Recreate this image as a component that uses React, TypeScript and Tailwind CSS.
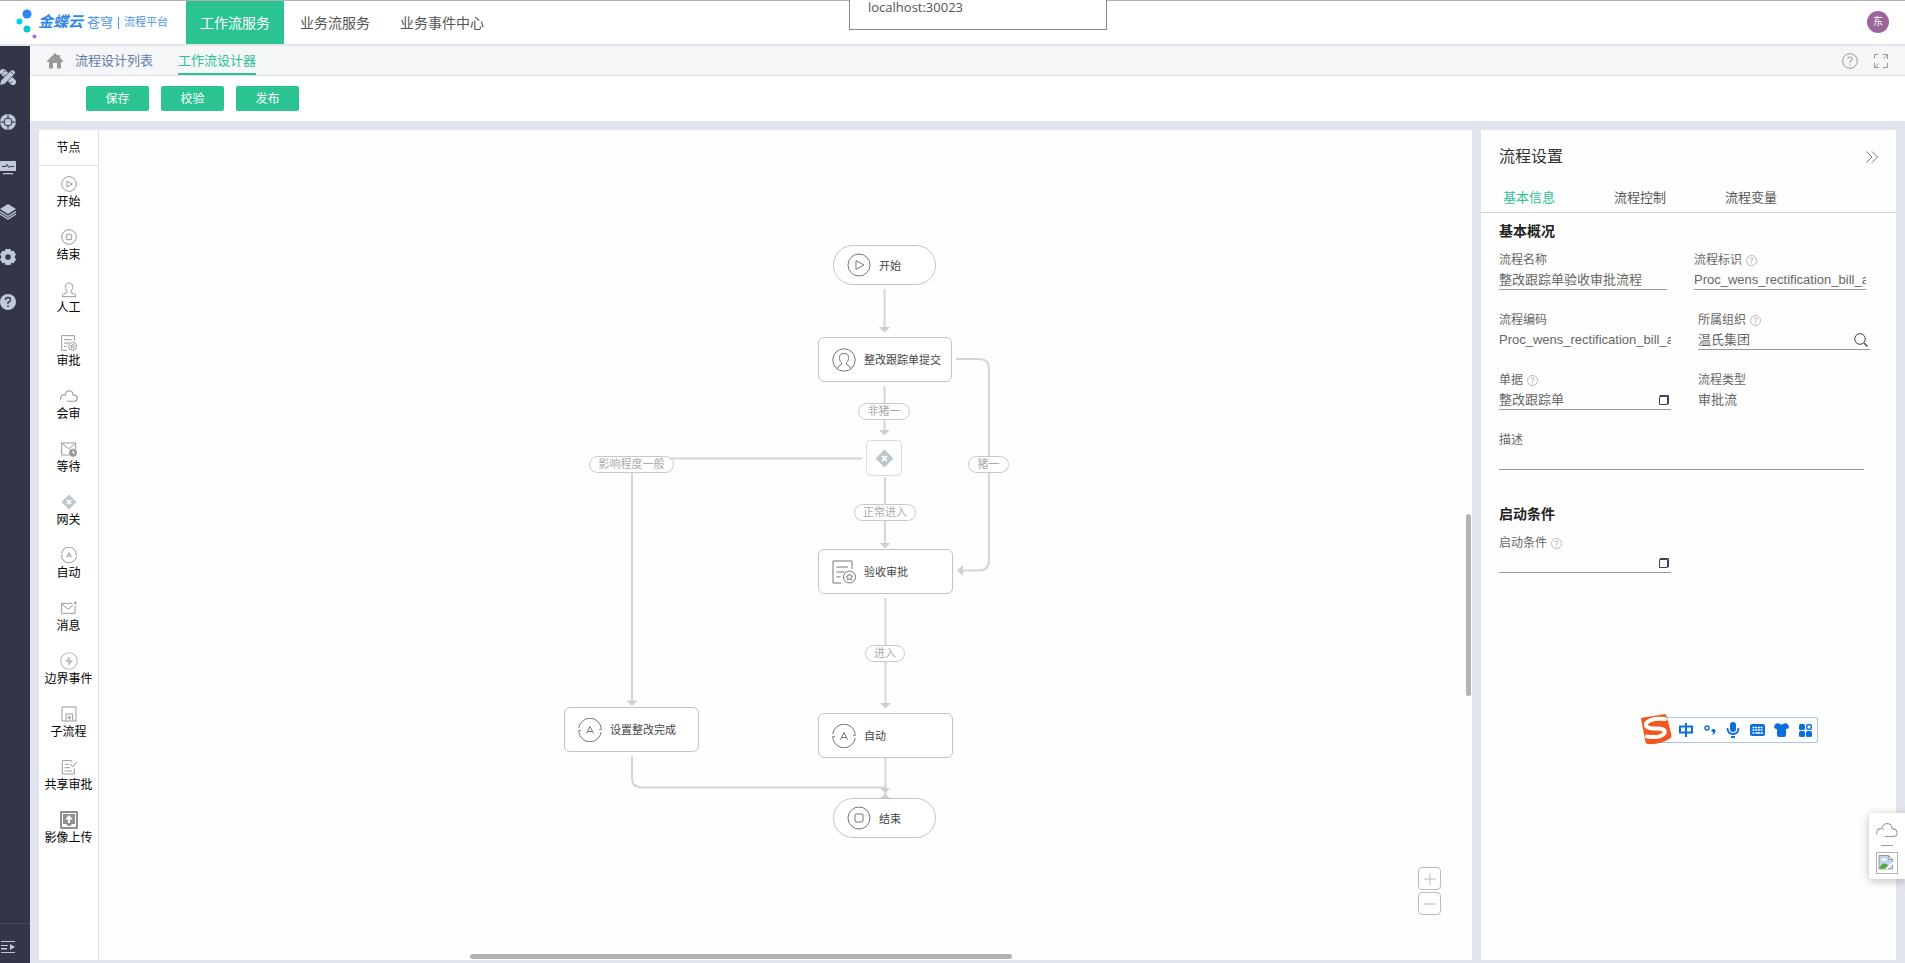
import { ReactNode } from "react";

type IconProps = { className?: string; strokeWidth?: number };

type PaletteItem = {
  label: string;
  icon: ReactNode;
};

type FlowNode = {
  label: string;
  icon: ReactNode;
  className: string;
};

/* Icons */
const Line = ({ className = "size-4", strokeWidth = 1.5, children }: IconProps & { children: ReactNode }) => (
  <svg className={className} viewBox="0 0 24 24" fill="none" stroke="currentColor" strokeWidth={strokeWidth} aria-hidden="true">
    {children}
  </svg>
);

const StartIcon = (props: IconProps) => (
  <Line {...props}>
    <circle cx="12" cy="12" r="11" />
    <path d="M9 7.5v9l8-4.5z" />
  </Line>
);

const EndIcon = (props: IconProps) => (
  <Line {...props}>
    <circle cx="12" cy="12" r="11" />
    <rect x="8" y="8" width="8" height="8" rx="1" />
  </Line>
);

const PersonIcon = (props: IconProps) => (
  <Line {...props}>
    <path d="M9 13.5C6.500 11.500 6.500 8.500 6.500 7C6.500 3.500 9 1.500 12 1.500S17.500 3.500 17.500 7C17.500 8.500 17.500 11.500 15 13.500V16L21 18.500Q22 19 22 22H2Q2 19 3 18.500L9 16Z" />
  </Line>
);

const UserIcon = (props: IconProps) => (
  <Line {...props}>
    <circle cx="12" cy="12" r="11.2" />
    <path d="M5.500 20.500Q5.500 18 9.500 16.500V14.500C7.500 13 7.500 11 7.500 9.500C7.500 7 9 5.500 12 5.500S16.500 7 16.500 9.500C16.500 11 16.500 13 14.500 14.500V16.500Q18.500 18 18.500 20.500" />
  </Line>
);

const ApproveIcon = (props: IconProps) => (
  <Line {...props}>
    <path d="M20 9V1H1v22h8M4.500 7H16M4.500 12h8M4.500 17h4" />
    <circle cx="17.500" cy="17" r="6" />
    <path d="M17.500 13.800l1 2 2.200.3-1.600 1.600.4 2.200-2-1-2 1 .4-2.200-1.600-1.600 2.200-.3z" />
  </Line>
);

const CloudIcon = (props: IconProps) => (
  <Line {...props}>
    <path d="M1 17Q0 11 5 10.500Q7 10 8.500 12M7 9.500Q8 5 12.500 5Q17 5.500 17.500 10.500Q23 11 23 15Q23 19 19 19H9.500" />
  </Line>
);

const WaitIcon = (props: IconProps) => (
  <Line {...props}>
    <path d="M12 21H1V3h21v9M1 3l10 8h2l9-8" />
    <circle cx="18" cy="17.500" r="6" fill="currentColor" stroke="none" />
    <path d="M18 14v4h3" stroke="white" />
  </Line>
);

const GatewayIcon = ({ className = "size-4" }: IconProps) => (
  <svg className={className} viewBox="0 0 24 24" aria-hidden="true">
    <rect x="4" y="4" width="16" height="16" rx="1" transform="rotate(45 12 12)" fill="#bcc7cd" />
    <path d="M8.800 8.800l6.400 6.400m0-6.400l-6.400 6.400" stroke="white" strokeWidth="2.200" />
  </svg>
);

const AutoIcon = (props: IconProps) => (
  <Line {...props}>
    <path d="M.8 10A11.300 11.300 0 0 1 23.200 10v1.500h-2M23.200 14A11.300 11.300 0 0 1 .8 14v-1.500h2" />
    <path d="M8.500 15.500L12 8.500l3.500 7M9.800 13.500h4.400" />
  </Line>
);

const MessageIcon = (props: IconProps) => (
  <Line {...props}>
    <path d="M17 5H1v15h20V9M1 6l9 7h2l6-5M21.500 2v5M19 4.500h5" />
  </Line>
);

const BoundaryIcon = (props: IconProps) => (
  <Line {...props}>
    <circle cx="12" cy="12" r="11" />
    <path d="M13 5.500L6.500 13H11v5.500L17.500 11H13z" fill="currentColor" stroke="none" />
  </Line>
);

const SubflowIcon = (props: IconProps) => (
  <Line {...props}>
    <path d="M1.500 1.500h21v21h-21zM7.500 22v-10h10v10M12.500 14.500v6M9.500 17.500h6" />
  </Line>
);

const ShareIcon = (props: IconProps) => (
  <Line {...props}>
    <path d="M17 2.500H2v20h18V14M5.500 8h6M5.500 13h8M5.500 18h11M14 8l4 4 6-8" />
  </Line>
);

const UploadIcon = ({ className = "size-[18px]" }: IconProps) => (
  <svg className={`shrink-0 ${className}`} viewBox="0 0 18 18" aria-hidden="true">
    <rect width="18" height="18" rx="1" fill="#8f8f8f" />
    <path d="M2.500 2.500h13v13h-13z" fill="none" stroke="white" />
    <path d="M9 4L5 8.500h3V12h2V8.500h3zM3 15v-2h3l2 2zM15 15v-2h-3l-2 2z" fill="white" />
  </svg>
);

const HelpIcon = ({ className = "size-[11px]", strokeWidth = 1.800 }: IconProps) => (
  <Line className={className} strokeWidth={strokeWidth}>
    <circle cx="12" cy="12" r="11" />
    <path d="M8.500 9Q8.500 6 12 6T15.500 9Q15.500 11 12 12.500V15M12 17v2" />
  </Line>
);

const WindowIcon = () => (
  <svg className="size-[10px]" viewBox="0 0 10 10" fill="none" stroke="#3a4456" aria-hidden="true">
    <path d="M.5 1.500h8v8h-8zM1 .5h8.500V9" />
  </svg>
);

const SearchIcon = () => (
  <svg className="size-[14px]" viewBox="0 0 14 14" fill="none" stroke="#3a4456" aria-hidden="true">
    <circle cx="6" cy="6" r="5.300" />
    <path d="M10 10l3.500 3.500" strokeWidth="1.400" />
  </svg>
);

const sideIcons = [
  {
    label: "设计",
    icon: (
      <>
        <rect x="5" y="-2" width="6" height="20" rx="1" transform="rotate(-45 8 8)" fill="#c0c8da" />
        <path d="M2 5.500L3.500 4M4 7.500L5.500 6M10.500 14l1.500-1.500M3.500 1.500L5 3" stroke="#343648" />
        <path d="M-.5 16.500l1.300-5L11 1.300Q12.500 0 14 1.500L14.700 2.200Q16 3.500 14.700 5L4.500 15.200z" fill="#c0c8da" stroke="#343648" strokeWidth=".8" />
        <path d="M10.500 2.500l3 3" stroke="#343648" strokeWidth=".8" />
      </>
    ),
  },
  {
    label: "导航",
    icon: (
      <>
        <circle cx="8" cy="8" r="8" fill="#c0c8da" />
        <circle cx="8" cy="8" r="4" fill="none" stroke="#343648" />
        <path d="M8 0v5M8 11v5M0 8h5M11 8h5" stroke="#343648" />
      </>
    ),
  },
  {
    label: "监控",
    icon: (
      <>
        <path d="M0 2h16v10H0zM3 14h10v1.200H3z" fill="#c0c8da" />
        <path d="M2 7.500h4l1-2 2 3 1-1h4" fill="none" stroke="#343648" />
      </>
    ),
  },
  {
    label: "图层",
    icon: (
      <>
        <path d="M8 0l8 5-8 5-8-5z" fill="#c0c8da" />
        <path d="M0 7.500l8 5 8-5M0 10l8 5 8-5" fill="none" stroke="#c0c8da" strokeWidth="1.300" />
      </>
    ),
  },
  {
    label: "设置",
    icon: (
      <>
        <path d="M5.500 0h5l.8 2.200 2.200-.4L16 5.500 14.500 8l1.500 2.500-2.500 3.700-2.200-.4-.8 2.200h-5l-.8-2.200-2.200.4L0 10.500 1.500 8 0 5.500l2.500-3.700 2.200.4z" fill="#c0c8da" />
        <circle cx="8" cy="8" r="2.800" fill="#343648" />
      </>
    ),
  },
  {
    label: "帮助",
    icon: (
      <>
        <circle cx="8" cy="8" r="8" fill="#c0c8da" />
        <path d="M5.500 6Q5.500 3.500 8 3.500T10.500 6Q10.500 7.300 8 8.500V10M8 11.500v1.500" fill="none" stroke="#343648" strokeWidth="1.400" />
      </>
    ),
  },
];

const paletteItems: Array<PaletteItem> = [
  { label: "开始", icon: <StartIcon /> },
  { label: "结束", icon: <EndIcon /> },
  { label: "人工", icon: <PersonIcon /> },
  { label: "审批", icon: <ApproveIcon /> },
  { label: "会审", icon: <CloudIcon className="size-[18px]" /> },
  { label: "等待", icon: <WaitIcon /> },
  { label: "网关", icon: <GatewayIcon /> },
  { label: "自动", icon: <AutoIcon /> },
  { label: "消息", icon: <MessageIcon /> },
  { label: "边界事件", icon: <BoundaryIcon className="size-[18px] text-[#bbb]" /> },
  { label: "子流程", icon: <SubflowIcon /> },
  { label: "共享审批", icon: <ShareIcon /> },
  { label: "影像上传", icon: <UploadIcon /> },
];

const flowNodes: Array<FlowNode> = [
  { label: "开始", icon: <StartIcon className="size-6" strokeWidth={1} />, className: "left-[734px] top-[115px] h-10 w-[103px] rounded-full" },
  { label: "整改跟踪单提交", icon: <UserIcon className="size-6" strokeWidth={1} />, className: "left-[719px] top-[207px] h-[45px] w-[134px] rounded-md" },
  { label: "验收审批", icon: <ApproveIcon className="size-6" strokeWidth={1} />, className: "left-[719px] top-[419px] h-[45px] w-[135px] rounded-md" },
  { label: "自动", icon: <AutoIcon className="size-6" strokeWidth={1} />, className: "left-[719px] top-[583px] h-[45px] w-[135px] rounded-md" },
  { label: "设置整改完成", icon: <AutoIcon className="size-6" strokeWidth={1} />, className: "left-[465px] top-[577px] h-[45px] w-[135px] rounded-md" },
  { label: "结束", icon: <EndIcon className="size-6" strokeWidth={1} />, className: "left-[734px] top-[668px] h-10 w-[103px] rounded-full" },
];

const flowLabels = [
  { text: "非猪一", className: "left-[759px] top-[273px] w-[52px]" },
  { text: "影响程度一般", className: "left-[490px] top-[326px] w-[85px]" },
  { text: "猪一", className: "left-[869px] top-[326px] w-[41px]" },
  { text: "正常进入", className: "left-[755px] top-[374px] w-[62px]" },
  { text: "进入", className: "left-[766px] top-[515px] w-[40px]" },
];

/* Top header */
const Header = () => (
  <header className="flex h-[46px] shrink-0 border-t border-b-2 border-t-[#b0b0b0] border-b-[#e2e5ea] bg-white">
    <a href="#home" className="flex w-[186px] items-center pl-4" aria-label="金蝶云苍穹流程平台">
      <svg className="h-8 w-[22px]" viewBox="0 0 22 32" aria-hidden="true">
        <circle cx="11" cy="7" r="4.500" fill="#2a86f0" />
        <circle cx="3.500" cy="14.500" r="3" fill="#00cffb" />
        <circle cx="11" cy="22" r="3.500" fill="#00c9c6" />
        <circle cx="18.500" cy="29.500" r="2" fill="#9f6bff" />
      </svg>
      <span className="text-[15px] font-bold italic text-[#2f86e6]">金蝶云</span>
      <span className="ml-1 text-[13px] text-[#4a96e8]">苍穹</span>
      <span className="mx-[5px] h-3 w-px bg-[#4a96e8]" />
      <span className="text-[11px] text-[#4a96e8]">流程平台</span>
    </a>
    <nav className="flex gap-0.5 text-sm text-[#555]">
      <a href="#workflow" className="flex items-center bg-[#2ac391] px-3.5 text-white">工作流服务</a>
      <a href="#business" className="flex items-center px-3.5">业务流服务</a>
      <a href="#events" className="flex items-center px-3.5">业务事件中心</a>
    </nav>
    <button className="mt-2.5 mr-4 ml-auto size-[22px] rounded-full bg-[#9b659c] text-[10px] leading-[22px] text-white">东</button>
  </header>
);

const SideBar = () => (
  <aside className="flex w-[30px] shrink-0 flex-col bg-[#343648]">
    <div className="flex flex-col gap-[29px] pt-[23px]">
      {sideIcons.map(({ label, icon }) => (
        <button key={label} aria-label={label} className="size-4">
          <svg className="size-4" viewBox="0 0 16 16">{icon}</svg>
        </button>
      ))}
    </div>
    <button aria-label="展开菜单" className="mt-auto flex h-10 items-center border-t border-[#484a5c] pt-1.5">
      <svg className="h-3 w-4" viewBox="0 0 16 12" fill="#c0c8da">
        <path d="M1 0h14v1H1zM1 4h7v1H1zM1 7h6v1.500H1zM1 11h14v1H1zM10 3l5 3-5 3z" />
      </svg>
    </button>
  </aside>
);

const SubBar = () => (
  <div className="flex h-[30px] shrink-0 items-center border-b border-[#e2e3e6] bg-[#f5f6f8] pr-[17px] pl-[17px]">
    <a href="#index" aria-label="首页">
      <svg className="size-4" viewBox="0 0 16 16" fill="#999">
        <path d="M8 0l3 2.800V2h2v2.800L16 8v1h-2v6.500h-4V10H6v5.500H2V9H0V8z" />
      </svg>
    </a>
    <nav className="ml-3 flex gap-[25px] self-stretch text-[13px]">
      <a href="#list" className="flex items-center text-[#5f7ba8]">流程设计列表</a>
      <a href="#designer" className="flex items-center border-y-2 border-t-transparent border-b-[#2ac391] text-[#2ac391]">工作流设计器</a>
    </nav>
    <div className="ml-auto flex gap-4 text-[#999]">
      <button aria-label="帮助"><HelpIcon className="size-4" strokeWidth={1.500} /></button>
      <button aria-label="全屏">
        <svg className="size-[14px]" viewBox="0 0 14 14" fill="none" stroke="currentColor">
          <path d="M.5 4.500v-4h4M9 .5h4.500V5M13.500 9v4.500H9M5 13.500H.5V9M13.500.5l-4 4M.5 13.500l4-4" />
        </svg>
      </button>
    </div>
  </div>
);

const Toolbar = () => (
  <div className="flex h-[45px] shrink-0 gap-3 bg-white pt-2.5 pl-14 text-xs text-white">
    {["保存", "校验", "发布"].map((text) => (
      <button key={text} className="h-[25px] w-[63px] rounded-xs bg-[#2ac391]">{text}</button>
    ))}
  </div>
);

const Palette = () => (
  <div className="w-[60px] shrink-0 border-r border-[#dedede] bg-white">
    <h2 className="flex h-9 items-center justify-center border-b border-[#e2e2e2] text-xs text-black">节点</h2>
    <ul className="flex flex-col gap-[17px] pt-2.5">
      {paletteItems.map(({ label, icon }) => (
        <li key={label}>
          <button className="flex w-full flex-col items-center text-[#999]">
            <span className="flex h-4 items-center">{icon}</span>
            <span className="text-xs leading-5 whitespace-nowrap text-black">{label}</span>
          </button>
        </li>
      ))}
    </ul>
  </div>
);

/* Diagram canvas */
const Canvas = () => (
  <div className="relative min-w-0 flex-1 overflow-hidden bg-[#fefefe]">
    <svg className="absolute top-0 left-0 h-[720px] w-[920px]" viewBox="0 0 920 720" fill="none" stroke="#d5d5d5" strokeWidth="2" aria-hidden="true">
      <path d="M785.500 159V200M785.500 256V302M786 347V415M786.500 468V575M786.500 628V664" />
      <path d="M857 229H880Q890 229 890 239V430Q890 440.500 880 440.500H862" />
      <path d="M763 328.500H543Q533 328.500 533 338V572M533 626V648Q533 657.500 543 657.500H786" />
      <g fill="#d0d0d0" stroke="none">
        <path d="M780 197h11l-5.500 5.500zM780 300h11l-5.500 5.500zM780.500 413h11l-5.500 5.500zM781 573h11l-5.500 5.500z" />
        <path d="M527.500 570.500h11l-5.500 5.500zM781 658h10l-5 5.500-5 5h10l-5-5.500zM864 435v11l-6-5.500z" />
      </g>
    </svg>
    {flowNodes.map(({ label, icon, className }) => (
      <div key={className} className={`absolute flex items-center border border-[#c4c4c4] bg-white pl-[13px] text-[11px] text-[#444] ${className}`}>
        <span className="text-[#777]">{icon}</span>
        <span className="ml-2 pt-0.5 whitespace-nowrap">{label}</span>
      </div>
    ))}
    <div className="absolute top-[310px] left-[767px] flex size-9 items-center justify-center rounded-sm border border-[#ddd] bg-white">
      <GatewayIcon className="size-[19px]" />
    </div>
    {flowLabels.map(({ text, className }) => (
      <span key={text} className={`absolute h-[17px] rounded-full border border-[#c8c8c8] bg-white text-center text-[11px] leading-[15px] whitespace-nowrap text-[#aaa] ${className}`}>
        {text}
      </span>
    ))}
    <div className="absolute right-[31px] bottom-[45px] flex flex-col gap-0.5 text-[#bbb]">
      <button aria-label="放大" className="flex size-[23px] items-center justify-center rounded-sm border border-[#bbb] bg-white">
        <Line className="size-3" strokeWidth={2}><path d="M12 0v24M0 12h24" /></Line>
      </button>
      <button aria-label="缩小" className="flex size-[23px] items-center justify-center rounded-sm border border-[#bbb] bg-white">
        <Line className="size-3" strokeWidth={2}><path d="M0 12h24" /></Line>
      </button>
    </div>
    <div className="absolute bottom-px left-[27%] h-[5px] w-[542px] rounded-full bg-[#b3b3b3]" />
    <div className="absolute top-[384px] right-px h-[182px] w-[5px] rounded-full bg-[#b3b3b3]" />
  </div>
);

type FieldProps = {
  id: string;
  label: string;
  value?: string;
  help?: boolean;
  line?: boolean;
  icon?: ReactNode;
  className?: string;
};

const Field = ({ id, label, value = "", help, line = true, icon, className = "w-43" }: FieldProps) => (
  <div className={className}>
    <label htmlFor={id} className="flex h-5 items-center gap-1 text-xs text-[#666]">
      {label}
      {help && <span className="text-[#aaa]"><HelpIcon /></span>}
    </label>
    <div className={`flex h-5 items-center border-b ${line ? "border-[#999]" : "border-transparent"}`}>
      <input id={id} defaultValue={value} className="min-w-0 flex-1 bg-transparent text-[13px] leading-[18px] text-[#666] outline-none" />
      {icon && <button type="button" aria-label={`选择${label}`} className="mr-0.5">{icon}</button>}
    </div>
  </div>
);

/* Settings panel */
const Settings = () => (
  <section className="w-[415px] shrink-0 bg-[#fefefe]">
    <div className="flex h-[54px] items-center justify-between pr-[18px] pl-[18px]">
      <h2 className="text-base text-[#333]">流程设置</h2>
      <button aria-label="收起">
        <svg className="size-3" viewBox="0 0 12 12" fill="none" stroke="#777">
          <path d="M.5.500L6 6 .5 11.500M6 .500L11.500 6 6 11.500" />
        </svg>
      </button>
    </div>
    <div className="flex h-[29px] items-center gap-[59px] border-b border-[#d2d2d2] pl-[22px] text-[13px] text-[#555]">
      <button className="text-[#2ac391]">基本信息</button>
      <button>流程控制</button>
      <button>流程变量</button>
    </div>
    <form className="pt-1.5 pl-[18px]">
      <h3 className="mb-[7px] text-sm leading-6 font-bold text-[#222]">基本概况</h3>
      <div className="flex flex-col gap-5">
        <div className="flex gap-[27px]">
          <Field id="name" label="流程名称" value="整改跟踪单验收审批流程" className="w-42" />
          <Field id="key" label="流程标识" value="Proc_wens_rectification_bill_audit" help />
        </div>
        <div className="flex gap-[27px]">
          <Field id="code" label="流程编码" value="Proc_wens_rectification_bill_audit" line={false} />
          <Field id="org" label="所属组织" value="温氏集团" help icon={<SearchIcon />} />
        </div>
        <div className="flex gap-[27px]">
          <Field id="bill" label="单据" value="整改跟踪单" help icon={<WindowIcon />} />
          <Field id="type" label="流程类型" value="审批流" line={false} />
        </div>
        <Field id="desc" label="描述" className="mr-8" />
      </div>
      <h3 className="mt-8 mb-[7px] text-sm leading-6 font-bold text-[#222]">启动条件</h3>
      <Field id="condition" label="启动条件" help icon={<WindowIcon />} />
    </form>
  </section>
);

/* Floating input method bar */
const InputBar = () => (
  <div className="absolute top-[717px] right-[87px] flex h-[26px] w-[164px] items-center rounded-xs border border-[#aac3e8] bg-white text-[#0a6fdb]">
    <svg className="absolute -top-1 -left-[15px] h-[31px] w-8" viewBox="0 0 32 31" aria-hidden="true">
      <path d="M1 5Q1 4 2 3.800L24 .2Q26 0 26.500 1.500L31.500 21Q32 23 30 24.500Q20 31 8 30Q6 30 5.500 28Z" fill="#f4561f" />
      <path d="M25 5Q10 3.500 6 9.500Q5 15 16 14.500Q26 14.500 24.500 19Q21 24.500 7 22.500" fill="none" stroke="white" strokeWidth="4" strokeLinecap="round" />
    </svg>
    <div className="ml-6 flex flex-1 items-center justify-between pr-[5px]">
      <svg className="size-[14px]" viewBox="0 0 14 14" fill="none" stroke="currentColor" strokeWidth="2">
        <path d="M1 3.500h12v6H1zM7 0v14" />
      </svg>
      <svg className="size-[14px]" viewBox="0 0 14 14">
        <circle cx="4" cy="5" r="2" fill="none" stroke="currentColor" strokeWidth="1.500" />
        <path d="M8.500 6.500q3-1.500 4 .8Q12.500 11 9 12q1.500-2 1-3Q8 9 8.500 6.500z" fill="currentColor" />
      </svg>
      <svg className="h-4 w-[14px]" viewBox="0 0 14 16">
        <rect x="4" width="6" height="10" rx="3" fill="currentColor" />
        <path d="M1.500 6Q1.500 12 7 12T12.500 6" fill="none" stroke="currentColor" strokeWidth="1.800" />
        <path d="M6 12h2v1H6zM5 14h4v2H5z" fill="currentColor" />
      </svg>
      <svg className="h-3 w-[15px]" viewBox="0 0 15 12">
        <rect width="15" height="12" rx="2" fill="currentColor" />
        <path d="M2.500 3.500h10M2.500 6h10" stroke="white" strokeWidth="1.500" strokeDasharray="2 .7" />
        <path d="M2.500 9h2M5.500 9h5M11 9h2" stroke="white" strokeWidth="1.500" />
      </svg>
      <svg className="h-[14px] w-[15px]" viewBox="0 0 15 14" fill="currentColor">
        <path d="M4.500.2Q7.500 3 10.500.2L13 .5Q15 2 15 5L12 6.200V12q0 2-2 2H5q-2 0-2-2V6.200L0 5Q0 2 2 .5z" />
      </svg>
      <svg className="size-[13px]" viewBox="0 0 13 13" fill="currentColor">
        <rect width="6" height="6" rx="1.500" />
        <rect x="7.800" y=".8" width="4.400" height="4.400" rx="1" fill="white" stroke="currentColor" strokeWidth="1.500" />
        <rect y="7" width="6" height="6" rx="1.500" />
        <rect x="7" y="7" width="6" height="6" rx="1.500" />
      </svg>
    </div>
  </div>
);

const FloatBox = () => (
  <div className="absolute top-[813px] right-0 flex h-[66px] w-9 flex-col items-center rounded-l-xs bg-white pt-1.5 text-[#999] shadow-[0_2px_10px_rgba(0,0,0,0.25)]">
    <CloudIcon className="size-[22px]" strokeWidth={1.100} />
    <span className="mt-1 h-px w-3 bg-[#999]" />
    <span className="mt-1.5 size-[22px] border border-[#b5b5b5] p-px">
      <svg className="size-4" viewBox="0 0 16 16" aria-hidden="true">
        <path d="M1 1.500h9.500l4 4V15H1z" fill="#c3d5f5" stroke="#999" />
        <path d="M10.500 1.500v4h4z" fill="white" stroke="#999" />
        <path d="M3 6.500Q3 4.500 5 4.500Q6 3 7.500 5Q9 5 9 6.500z" fill="white" />
        <path d="M1.500 14.500Q3 9.500 6.500 9.500T11 14.500z" fill="#55a83a" />
        <path d="M8 15l7.500-6.500" stroke="white" strokeWidth="2" />
      </svg>
    </span>
  </div>
);

const App = () => {
  return (
    <div className="relative flex h-screen flex-col overflow-hidden bg-[#e1e5ee] font-['Liberation_Sans','Noto_Sans_CJK_SC',sans-serif]">
      <Header />
      <div className="flex min-h-0 flex-1">
        <SideBar />
        <div className="flex min-w-0 flex-1 flex-col">
          <SubBar />
          <Toolbar />
          <main className="flex min-h-0 flex-1 gap-[9px] px-[9px] pt-[9px] pb-[3px]">
            <div className="flex min-w-0 flex-1">
              <Palette />
              <Canvas />
            </div>
            <Settings />
          </main>
        </div>
      </div>

      {/* Address popup */}
      <div className="absolute top-0 left-[849px] h-[30px] w-[258px] border border-t-0 border-[#888] bg-white pl-[18px] font-['Open_Sans',sans-serif] text-[13px] leading-[14px] text-[#555]">
        localhost:30023
      </div>
      <InputBar />
      <FloatBox />
    </div>
  );
};

export default App;
